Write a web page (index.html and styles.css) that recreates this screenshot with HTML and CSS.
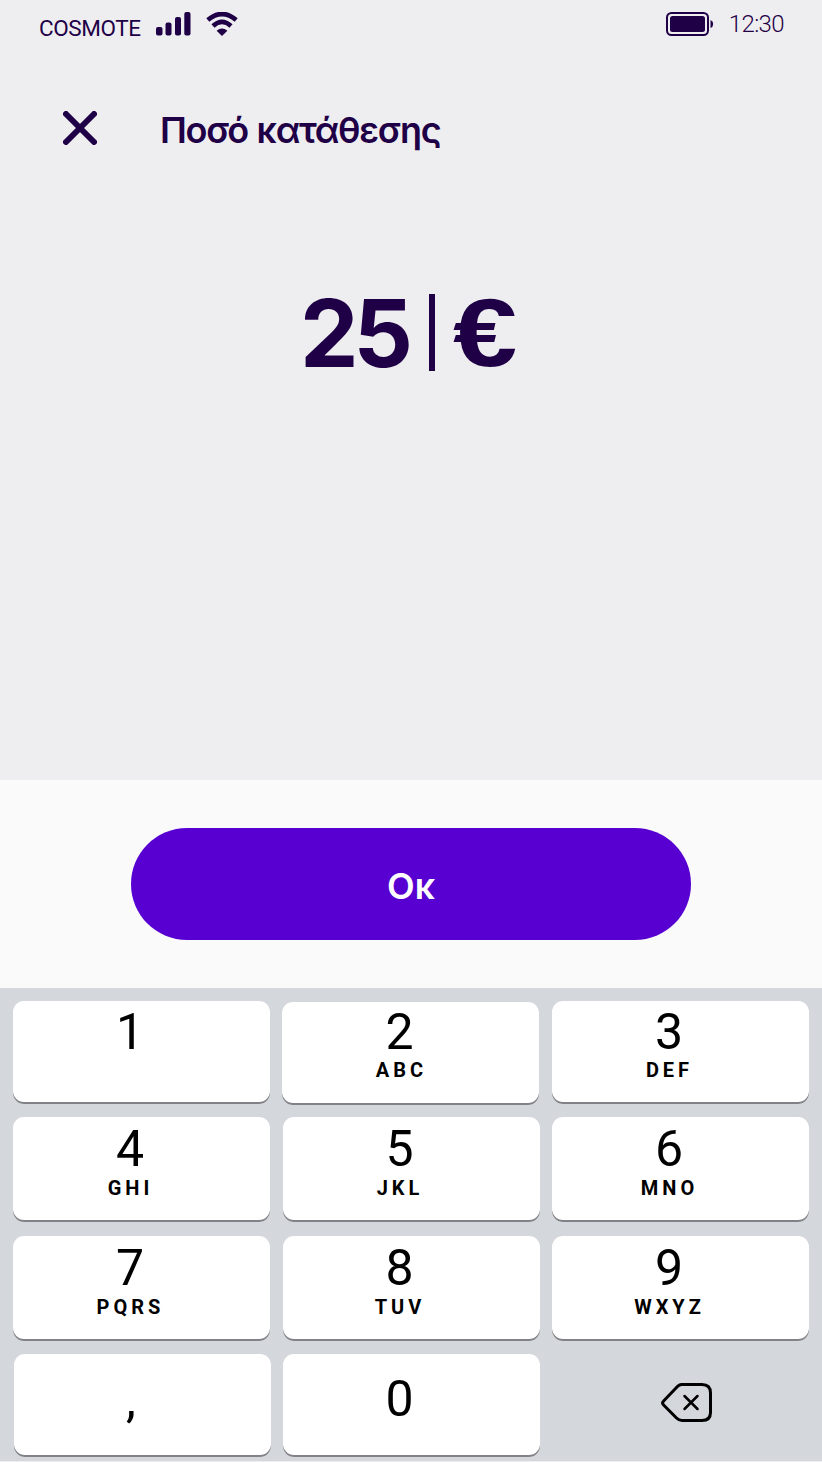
FILE: index.html
```
<!DOCTYPE html>
<html lang="el">
<head>
<meta charset="utf-8">
<title>Ποσό κατάθεσης</title>
<link rel="stylesheet" href="styles.css">
</head>
<body>
<div class="screen">
  <header class="status">
    <span class="carrier">COSMOTE</span>
    <svg class="signal" width="35" height="24" viewBox="0 0 35 24"><rect x="0" y="15" width="6.5" height="8.500" rx="2"/><rect x="9.500" y="10.500" width="6" height="13" rx="2"/><rect x="19" y="5" width="6" height="18.500" rx="2"/><rect x="28.300" y="0" width="6.200" height="23.500" rx="2"/></svg>
    <svg class="wifi" width="32" height="25" viewBox="0 0 32 25"><path d="M1.800 8Q16-4 30.200 8M7 14Q16 5.800 25 14" fill="none" stroke="#1f0047" stroke-width="4.600"/><path d="M10.600 18.700Q16 14.300 21.400 18.700L16 24Z"/></svg>
    <svg class="battery" width="48" height="24" viewBox="0 0 48 24"><rect x="1" y="1" width="41" height="22" rx="4.500" fill="none" stroke="#1f0047" stroke-width="2"/><rect x="4" y="4" width="35" height="16" rx="2.500"/><path d="M44.500 8Q47.200 9 47.200 12T44.500 16Z"/></svg>
    <span class="clock">12:30</span>
  </header>
  <div class="titlebar">
    <svg class="close" width="34" height="34" viewBox="0 0 34 34"><path d="M3 3L31 31M31 3L3 31" fill="none" stroke="#1f0047" stroke-width="6" stroke-linecap="round"/></svg>
    <h1 class="title">Ποσό κατάθεσης</h1>
  </div>
  <div class="amount"><span class="digits">25</span><i class="caret"></i><span class="euro">€</span></div>
  <div class="action"><button class="ok">Οκ</button></div>
  <div class="keypad">
    <div class="key"><b>1</b></div>
    <div class="key key-two"><b>2</b><small>ABC</small></div>
    <div class="key"><b>3</b><small>DEF</small></div>
    <div class="key mid"><b>4</b><small>GHI</small></div>
    <div class="key mid"><b>5</b><small>JKL</small></div>
    <div class="key mid"><b>6</b><small>MNO</small></div>
    <div class="key mid"><b>7</b><small>PQRS</small></div>
    <div class="key mid"><b>8</b><small>TUV</small></div>
    <div class="key mid"><b>9</b><small>WXYZ</small></div>
    <div class="key low comma"><b>,</b></div>
    <div class="key low"><b>0</b></div>
    <div class="erase"><svg width="52" height="42" viewBox="0 0 52 42"><path d="M20.500 2.500H41Q49.500 2.500 49.500 11V30.500Q49.500 38.500 41 38.500H21Q18 38.500 15.500 36L2.600 23Q.6 21 2.600 19L15 6Q18 2.500 20.500 2.500Z" fill="none" stroke="#000" stroke-width="3"/><path d="M23.500 14L36.500 27M36.500 14L23.500 27" fill="none" stroke="#000" stroke-width="2.500" stroke-linecap="round"/></svg></div>
  </div>
</div>
</body>
</html>
```
FILE: styles.css
```
* { box-sizing: border-box; }
body { margin: 0; }
.screen {
  width: 822px;
  height: 1462px;
  display: flex;
  flex-direction: column;
  overflow: hidden;
  background: #eeeef0;
  color: #1f0047;
  fill: #1f0047;
}
.status {
  height: 96px;
  padding: 12px 39px 0 39px;
  display: flex;
  align-items: flex-start;
}
.carrier {
  width: 117px;
  padding-top: 4px;
  font: 400 22.5px/25px Roboto, sans-serif;
  letter-spacing: -0.4px;
}
.wifi { margin-left: 15px; }
.battery { margin-left: auto; }
.clock {
  margin-left: 15px;
  margin-right: -1px;
  font: 300 24px/24px Roboto, sans-serif;
  letter-spacing: -0.6px;
}
.titlebar {
  height: 174px;
  padding: 15px 63px 0;
  display: flex;
  align-items: flex-start;
}
.title {
  margin: 0 0 0 63px;
  font: 600 36px/38px Inter, sans-serif;
  letter-spacing: -1.3px;
  word-spacing: 1px;
}
.amount {
  height: 510px;
  padding: 24px 0 0 300px;
  display: flex;
  align-items: flex-start;
  font: 700 93px/78px Inter, sans-serif;
}
.digits {
  width: 110px;
  letter-spacing: -5px;
}
.caret {
  width: 6px;
  height: 77px;
  margin: 0 18px 0 19px;
  background: #1f0047;
}
.euro {
  font: 700 97px/77px "Liberation Sans", Arial, sans-serif;
  transform: scaleX(1.19);
  transform-origin: left;
}
.action {
  height: 208px;
  display: flex;
  align-items: center;
  justify-content: center;
  background: #fafafa;
}
.ok {
  width: 560px;
  height: 112px;
  padding: 3px 0 0;
  border: 0;
  border-radius: 56px;
  background: #5700d1;
  color: #fff;
  font: 600 36px/40px Inter, sans-serif;
}
.keypad {
  height: 474px;
  padding: 13px 13px 0;
  display: grid;
  grid-template-columns: repeat(3, 257px);
  grid-template-rows: 103px 105px 105px 103px;
  gap: 13.3px 12.5px;
  background: #d4d7dc;
  border-bottom: 1px solid #eceef0;
}
.key {
  padding: 6px 23px 0 0;
  display: flex;
  flex-direction: column;
  align-items: center;
  border-radius: 11px;
  background: #fff;
  box-shadow: inset 0 -2px 0 #808287;
  color: #000;
  font-family: Roboto, sans-serif;
}
.key b { font-size: 50px; line-height: 50px; font-weight: 400; }
.key small {
  margin: 3px -1px 0 0;
  font-size: 20px;
  line-height: 20px;
  font-weight: 700;
  letter-spacing: 4px;
}
.key-two { margin: 1px 1px -1px -1px; padding-top: 5px; padding-right: 21px; }
.key-two small { margin-right: -4px; }
.mid { padding-top: 7px; }
.mid small { margin-top: 4px; }
.low { padding-top: 20px; }
.comma { margin: 0 -1px 0 1px; }
.erase { padding: 28px 0 0 109px; }
```
